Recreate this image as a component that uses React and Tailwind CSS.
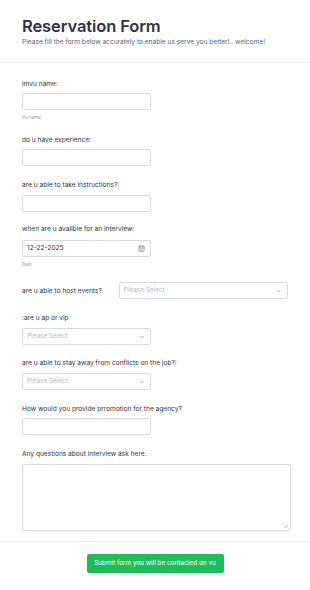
import { ChevronDown, CalendarDays } from 'lucide-react';

const font = { fontFamily: 'Inter, "Noto Sans", sans-serif' };

function Label({ children, className = '' }) {
  return <div className={`text-[6.6px] leading-[10px] text-[#2c3345] ${className}`}>{children}</div>;
}

function TextBox() {
  return <div className="w-[129px] h-[17px] border border-[#d8dae3] rounded-[2px] bg-white" />;
}

function Select({ width = 'w-[129px]' }) {
  return (
    <div className={`${width} h-[17px] border border-[#d8dae3] rounded-[2px] bg-white flex items-center justify-between pl-[4px] pr-[5px]`}>
      <span className="text-[6.4px] text-[#b3b9c8]">Please Select</span>
      <ChevronDown size={6} strokeWidth={2.5} className="text-[#6f7a90]" />
    </div>
  );
}

export default function App() {
  return (
    <div className="w-[310px] h-[590px] bg-white overflow-hidden" style={font}>
      {/* Header */}
      <div className="px-[22px] pt-[16px] pb-[15px] border-b border-[#eceef2]">
        <h1 className="text-[16.5px] leading-[20px] font-semibold text-[#2c3345] tracking-[-0.1px]">Reservation Form</h1>
        <p className="text-[6.6px] leading-[10px] text-[#57647e] mt-[1px]">
          Please fill the form below accurately <span className="text-[#3b62a6]">to enable us serve</span> you better!.. welcome!
        </p>
      </div>

      {/* Fields */}
      <div className="px-[22px] pt-[16px] pb-[10px] flex flex-col">
        <Label>imvu name:</Label>
        <div className="mt-[4px]"><TextBox /></div>
        <div className="text-[4.5px] leading-[7px] text-[#8a93a6] mt-[4px]">Vu name</div>

        <Label className="mt-[14px]">do u have experience:</Label>
        <div className="mt-[4px]"><TextBox /></div>

        <Label className="mt-[14px]">are u able to take instructions?:</Label>
        <div className="mt-[5px]"><TextBox /></div>

        <Label className="mt-[12px]">when are u avalible for an interview:</Label>
        <div className="mt-[6px] w-[129px] h-[17px] border border-[#d8dae3] rounded-[2px] flex items-center justify-between pl-[4px] pr-[5px]">
          <span className="text-[6.6px] text-[#2c3345]">12-22-2025</span>
          <CalendarDays size={7} strokeWidth={2} className="text-[#6f7a90]" />
        </div>
        <div className="text-[4.5px] leading-[7px] text-[#8a93a6] mt-[4px]">Date</div>

        <div className="flex items-center mt-[14px]">
          <Label className="w-[98px]">are u able to host events?</Label>
          <Select width="w-[171px]" />
        </div>

        <Label className="mt-[14px]">:are u ap or vip</Label>
        <div className="mt-[5px]"><Select /></div>

        <Label className="mt-[13px]">are u able to stay away from conflicts on the job?:</Label>
        <div className="mt-[5px]"><Select /></div>

        <Label className="mt-[14px]">How would you provide prromotion for the agency?</Label>
        <div className="mt-[4px]"><TextBox /></div>

        <Label className="mt-[14px]">Any questions about interview ask here.</Label>
        <div className="mt-[5px] w-[269px] h-[67px] border border-[#d8dae3] rounded-[2px] relative">
          <svg className="absolute right-[2px] bottom-[2px]" width="4" height="4" viewBox="0 0 4 4">
            <path d="M4 0L0 4M4 2L2 4" stroke="#b0b4c0" strokeWidth="0.6" />
          </svg>
        </div>
      </div>

      {/* Footer */}
      <div className="border-t border-[#eceef2] flex justify-center pt-[12px]">
        <button className="w-[137px] h-[19px] bg-[#1fbd5a] rounded-[2px] text-white text-[6.4px]">
          Submit form you will be contacted on vu
        </button>
      </div>
    </div>
  );
}
